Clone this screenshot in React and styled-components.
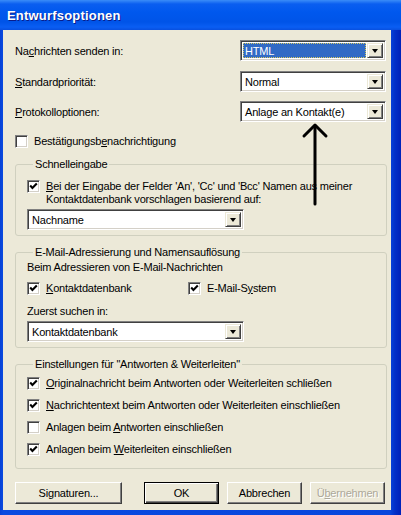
import React from 'react';
import styled, { createGlobalStyle } from 'styled-components';

const GlobalStyle = createGlobalStyle`
  html, body {
    margin: 0;
    padding: 0;
    background: #0843d8;
  }
  body {
    font-family: "Liberation Sans", Arial, sans-serif;
    font-size: 11px;
    letter-spacing: -0.2px;
    color: #000;
  }
`;

const Window = styled.div`
  position: relative;
  width: 401px;
  height: 515px;
  display: flex;
  flex-direction: column;
  background: linear-gradient(90deg, #0842d6 0px, #0a4ae0 3px, #0846dc 390px, #0330c8 395px, #0021b8 401px);
  overflow: hidden;
`;

const TitleBar = styled.div`
  height: 30px;
  flex: none;
  display: flex;
  align-items: center;
  padding: 1px 0 0 7px;
  box-sizing: border-box;
  background: linear-gradient(180deg, #3a8cf8 0px, #0a5ef0 4px, #0058ee 12px, #0054e8 22px, #0a5ef3 27px, #0850e0 30px);
  color: #fff;
  font-family: "Liberation Sans", Arial, sans-serif;
  font-weight: bold;
  font-size: 13px;
  letter-spacing: 0.2px;
  text-shadow: 1px 1px 0 #0a1d8a;
`;

const Body = styled.div`
  flex: 1;
  margin: 0 10px 5px 3px;
  padding: 10px 4px 0 12px;
  background: #ece9d8;
  display: flex;
  flex-direction: column;
`;

const FieldRow = styled.div`
  display: flex;
  align-items: center;
  justify-content: space-between;
  height: 21px;
  margin-top: ${p => p.$mt || 0}px;
  padding-right: 1px;
`;

const Acc = styled.span`
  text-decoration: underline;
  text-underline-offset: 1px;
`;

const Text = styled.div`
  line-height: 13px;
  margin-top: ${p => p.$mt || 0}px;
  white-space: nowrap;
`;

const ComboBox = styled.div`
  width: ${p => p.$w}px;
  height: 21px;
  box-sizing: border-box;
  margin-top: ${p => p.$mt || 0}px;
  display: flex;
  align-items: stretch;
  background: #fff;
  border: 1px solid;
  border-color: #808080 #fff #fff #808080;
  box-shadow: inset 1px 1px 0 #404040, inset -1px -1px 0 #d4d0c8;
  padding: 2px;
`;

const ComboValue = styled.div`
  flex: 1;
  display: flex;
  align-items: center;
  padding-left: 2px;
  margin-right: 1px;
  box-sizing: border-box;
  white-space: nowrap;
  color: ${p => (p.$selected ? '#fff' : '#000')};
  background: ${p => (p.$selected ? '#316ac5' : 'transparent')};
  outline: ${p => (p.$selected ? '1px dotted #d8c860' : 'none')};
  outline-offset: -1px;
`;

const DropButton = styled.div`
  width: 16px;
  flex: none;
  box-sizing: border-box;
  background: #ece9d8;
  border: 1px solid;
  border-color: #ece9d8 #404040 #404040 #ece9d8;
  box-shadow: inset 1px 1px 0 #fff, inset -1px -1px 0 #808080;
  display: flex;
  align-items: center;
  justify-content: center;

  &::after {
    content: "";
    width: 0;
    height: 0;
    border-left: 3.5px solid transparent;
    border-right: 3.5px solid transparent;
    border-top: 4px solid #000;
    margin-top: 1px;
  }
`;

const Combo = ({ value, width, selected, mt }) => (
  <ComboBox $w={width} $mt={mt}>
    <ComboValue $selected={selected}>{value}</ComboValue>
    <DropButton />
  </ComboBox>
);

const CheckRow = styled.label`
  display: flex;
  align-items: ${p => (p.$top ? 'flex-start' : 'center')};
  gap: 6px;
  line-height: 13px;
  margin-top: ${p => p.$mt || 0}px;
  white-space: nowrap;
`;

const Box = styled.span`
  width: 13px;
  height: 13px;
  flex: none;
  box-sizing: border-box;
  background: #fff;
  border: 1px solid;
  border-color: #808080 #fff #fff #808080;
  box-shadow: inset 1px 1px 0 #404040, inset -1px -1px 0 #d4d0c8;
  display: flex;
  align-items: center;
  justify-content: center;
`;

const CheckBox = ({ checked }) => (
  <Box>
    {checked && (
      <svg width="9" height="9" viewBox="0 0 9 9">
        <path d="M1.2 3.6 L3.4 5.9 L7.8 1.5" fill="none" stroke="#000" strokeWidth="2.1" />
      </svg>
    )}
  </Box>
);

const Check = ({ checked, children, mt, top }) => (
  <CheckRow $mt={mt} $top={top}>
    <CheckBox checked={checked} />
    <span>{children}</span>
  </CheckRow>
);

const Group = styled.fieldset`
  margin: ${p => p.$mt || 0}px 0 0 0;
  padding: ${p => p.$pt}px 8px ${p => p.$pb}px 11px;
  border: 1px solid #d0d0bf;
  border-radius: 3px;
  display: flex;
  flex-direction: column;
  align-items: flex-start;
  min-width: 0;
`;

const Legend = styled.legend`
  padding: 0 2px;
  margin-left: 6px;
  line-height: 13px;
  white-space: nowrap;
`;

const InlineChecks = styled.div`
  display: flex;
  margin-top: ${p => p.$mt || 0}px;
  width: 100%;

  & > label:first-child {
    width: 161px;
  }
`;

const ButtonRow = styled.div`
  display: flex;
  align-items: center;
  margin-top: 13px;
  gap: 8px;
  padding-right: 2px;
`;

const Spacer = styled.div`
  flex: 1;
`;

const Button = styled.button`
  width: ${p => p.$w || 75}px;
  height: 22px;
  box-sizing: border-box;
  font-family: inherit;
  font-size: 11px;
  letter-spacing: -0.2px;
  padding: 0;
  background: #ece9d8;
  color: ${p => (p.disabled ? '#aca899' : '#000')};
  text-shadow: ${p => (p.disabled ? '1px 1px 0 #fff' : 'none')};
  border: 1px solid;
  border-color: ${p => (p.$default ? '#000' : '#fff #404040 #404040 #fff')};
  box-shadow: ${p =>
    p.$default
      ? 'inset 1px 1px 0 #fff, inset -1px -1px 0 #404040, inset -2px -2px 0 #808080'
      : 'inset -1px -1px 0 #808080'};
  cursor: default;
`;

const Arrow = styled.svg`
  position: absolute;
  left: 301px;
  top: 122px;
  pointer-events: none;
`;

export default function App() {
  return (
    <>
      <GlobalStyle />
      <Window>
        <TitleBar>Entwurfsoptionen</TitleBar>
        <Body>
          <FieldRow>
            <span>Na<Acc>c</Acc>hrichten senden in:</span>
            <Combo value="HTML" width={146} selected />
          </FieldRow>
          <FieldRow $mt={10}>
            <span><Acc>S</Acc>tandardpriorität:</span>
            <Combo value="Normal" width={146} />
          </FieldRow>
          <FieldRow $mt={9}>
            <span><Acc>P</Acc>rotokolloptionen:</span>
            <Combo value="Anlage an Kontakt(e)" width={146} />
          </FieldRow>
          <Check mt={13}>
            Bestätigungsb<Acc>e</Acc>nachrichtigung
          </Check>

          <Group $mt={10} $pt={9} $pb={5}>
            <Legend>Schnelleingabe</Legend>
            <Check checked top>
              <Acc>B</Acc>ei der Eingabe der Felder 'An', 'Cc' und 'Bcc' Namen aus meiner
              <br />
              Kontaktdatenbank vorschlagen basierend auf:
            </Check>
            <Combo value="Nachname" width={217} mt={3} />
          </Group>

          <Group $mt={10} $pt={2} $pb={5}>
            <Legend>E-Mail-Adressierung und Namensauflösung</Legend>
            <Text>Beim Adressieren von E-Mail-Nachrichten</Text>
            <InlineChecks $mt={8}>
              <Check checked><Acc>K</Acc>ontaktdatenbank</Check>
              <Check checked>E-Mail-S<Acc>y</Acc>stem</Check>
            </InlineChecks>
            <Text $mt={10}>Zuerst suchen in:</Text>
            <Combo value="Kontaktdatenbank" width={217} mt={3} />
          </Group>

          <Group $mt={10} $pt={6} $pb={12}>
            <Legend>Einstellungen für "Antworten &amp; Weiterleiten"</Legend>
            <Check checked>
              <Acc>O</Acc>riginalnachricht beim Antworten oder Weiterleiten schließen
            </Check>
            <Check checked mt={9}>
              <Acc>N</Acc>achrichtentext beim Antworten oder Weiterleiten einschließen
            </Check>
            <Check mt={9}>
              Anlagen beim <Acc>A</Acc>ntworten einschließen
            </Check>
            <Check checked mt={9}>
              Anlagen beim <Acc>W</Acc>eiterleiten einschließen
            </Check>
          </Group>

          <ButtonRow>
            <Button $w={107}>Signaturen...</Button>
            <Spacer />
            <Button $default>OK</Button>
            <Button>Abbrechen</Button>
            <Button disabled>Ü<Acc>b</Acc>ernehmen</Button>
          </ButtonRow>
        </Body>
        <Arrow width="28" height="86" viewBox="0 0 28 86">
          <path d="M14 4 L14 82" stroke="#000" strokeWidth="3" strokeLinecap="round" />
          <path d="M3 14 L14 3 L25 14" fill="none" stroke="#000" strokeWidth="3" strokeLinecap="round" strokeLinejoin="round" />
        </Arrow>
      </Window>
    </>
  );
}
